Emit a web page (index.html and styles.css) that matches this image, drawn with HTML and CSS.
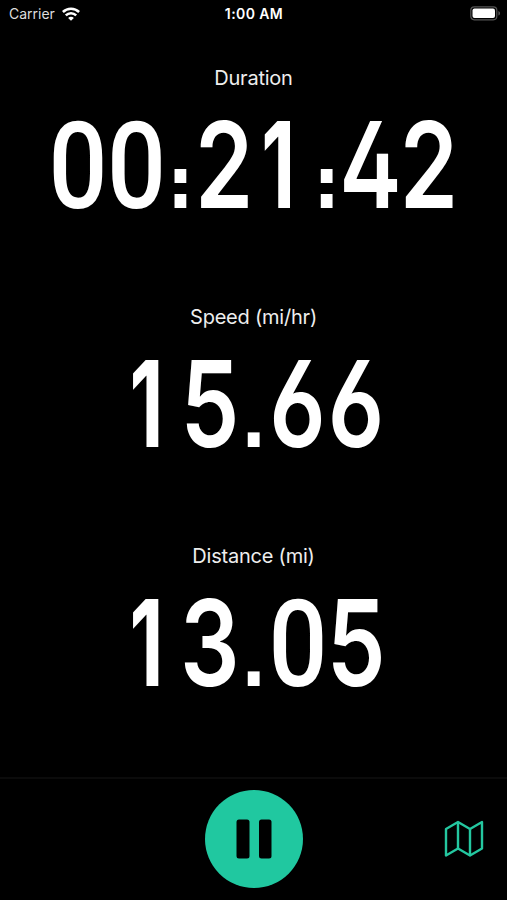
FILE: index.html
```html
<!DOCTYPE html>
<html lang="en">
<head>
  <meta charset="UTF-8" />
  <meta name="viewport" content="width=device-width, initial-scale=1.0" />
  <title>Ride</title>
  <link rel="stylesheet" href="styles.css">
</head>
<body>
  <header class="status-bar">
    <div class="carrier">
      <span>Carrier</span>
      <svg width="18" height="14" viewBox="0 0 18 14" fill="none" stroke="#fff" stroke-width="2.5">
        <path d="M0.9 5C5.4 0.6 12.6 0.6 17.1 5" />
        <path d="M3.8 8.3C6.7 5.4 11.3 5.4 14.2 8.3" />
        <path d="M9 13.8L6.1 10.9C7.6 9.5 10.4 9.5 11.9 10.9Z" fill="#fff" stroke="none" />
      </svg>
    </div>
    <div class="time">1:00 AM</div>
    <div class="battery">
      <svg width="31" height="15" viewBox="0 0 31 15">
        <rect x="0.8" y="0.8" width="26" height="13" rx="3.5" fill="none" stroke="#555" stroke-width="1.2" />
        <rect x="2.5" y="2.5" width="22.5" height="9.6" rx="2" fill="#fff" />
        <path d="M28.4 5C30.6 5.8 30.6 8.8 28.4 9.6Z" fill="#555" />
      </svg>
    </div>
  </header>

  <main class="stats">
    <section class="stat">
      <h2>Duration</h2>
      <div class="value"><span class="zero">0</span><span class="zero">0</span><span class="colon">:</span><span>2</span><span class="one">1</span><span class="colon">:</span><span>4</span><span>2</span></div>
    </section>
    <section class="stat">
      <h2>Speed (mi/hr)</h2>
      <div class="value"><span class="one">1</span><span>5</span><span class="dot">.</span><span>6</span><span>6</span></div>
    </section>
    <section class="stat">
      <h2>Distance (mi)</h2>
      <div class="value"><span class="one">1</span><span class="three">3</span><span class="dot">.</span><span class="zero">0</span><span>5</span></div>
    </section>
  </main>

  <footer class="controls">
    <button class="pause" aria-label="Pause">
      <svg width="36" height="40" viewBox="0 0 36 40">
        <rect x="0.5" y="0.5" width="13" height="39" rx="2.5" />
        <rect x="23" y="0.5" width="12.5" height="39" rx="2.5" />
      </svg>
    </button>
    <button class="map" aria-label="Map">
      <svg width="40" height="38" viewBox="0 0 40 38" fill="none" stroke="#24c7a0" stroke-width="2.4" stroke-linejoin="round">
        <path d="M2 9L14 2L26 9L38 2V28.5L26 35.5L14 28.5L2 35.5Z" />
        <path d="M14 2V28.5M26 9V35.5" />
      </svg>
    </button>
  </footer>
</body>
</html>
```

FILE: styles.css
```css
* {
  box-sizing: border-box;
}
body {
  margin: 0;
  height: 900px;
  display: flex;
  flex-direction: column;
  overflow: hidden;
  background: #000;
  color: #fff;
  font-family: Inter, Roboto, sans-serif;
}
.status-bar {
  height: 27px;
  padding: 0 6px 0 9px;
  display: grid;
  grid-template-columns: 1fr auto 1fr;
  align-items: center;
  font-size: 14px;
}
.carrier {
  display: flex;
  align-items: center;
  gap: 7px;
  color: #ddd;
}
.time {
  padding-right: 2px;
  font-weight: 600;
  font-size: 14px;
  letter-spacing: 0.4px;
}
.battery {
  display: flex;
  justify-content: flex-end;
}
.stats {
  height: 750px;
  padding-top: 38px;
}
.stat {
  height: 239px;
  display: flex;
  flex-direction: column;
  align-items: center;
}
.stat h2 {
  margin: 0;
  font-size: 20px;
  line-height: 27px;
  font-weight: 400;
  letter-spacing: -0.22px;
  color: #eee;
}
.value {
  display: flex;
  align-items: baseline;
  justify-content: center;
  font-size: 120px;
  line-height: 146px;
  font-weight: 600;
  font-feature-settings: "ss01", "calt" 0;
  transform: scaleX(0.78);
}
.value span {
  width: 75px;
  flex: none;
  display: flex;
  justify-content: center;
}
.value .one {
  padding-right: 15px;
  font-weight: 700;
  transform: scaleX(0.84);
}
.value .zero {
  font-family: Roboto, sans-serif;
  font-size: 121px;
  font-weight: 500;
  transform: scaleX(1.1);
}
.value .three {
  font-feature-settings: normal;
}
.value .colon {
  width: 37.5px;
  font-size: 75px;
  font-weight: 900;
  font-feature-settings: "ss07", "calt" 0;
}
.value .dot {
  width: 37.5px;
  font-size: 104px;
  font-feature-settings: "ss07";
}
.controls {
  height: 123px;
  border-top: 2px solid #0b0b0b;
  padding: 0 23px 2px 0;
  display: grid;
  grid-template-columns: 1fr auto 1fr;
  align-items: center;
}
button {
  border: none;
  padding: 0;
  background: none;
  cursor: pointer;
}
.pause {
  grid-column: 2;
  width: 98px;
  height: 98px;
  margin-left: 23px;
  border-radius: 50%;
  background: #20c8a0;
  display: flex;
  align-items: center;
  justify-content: center;
}
.map {
  justify-self: end;
  display: flex;
}
```
